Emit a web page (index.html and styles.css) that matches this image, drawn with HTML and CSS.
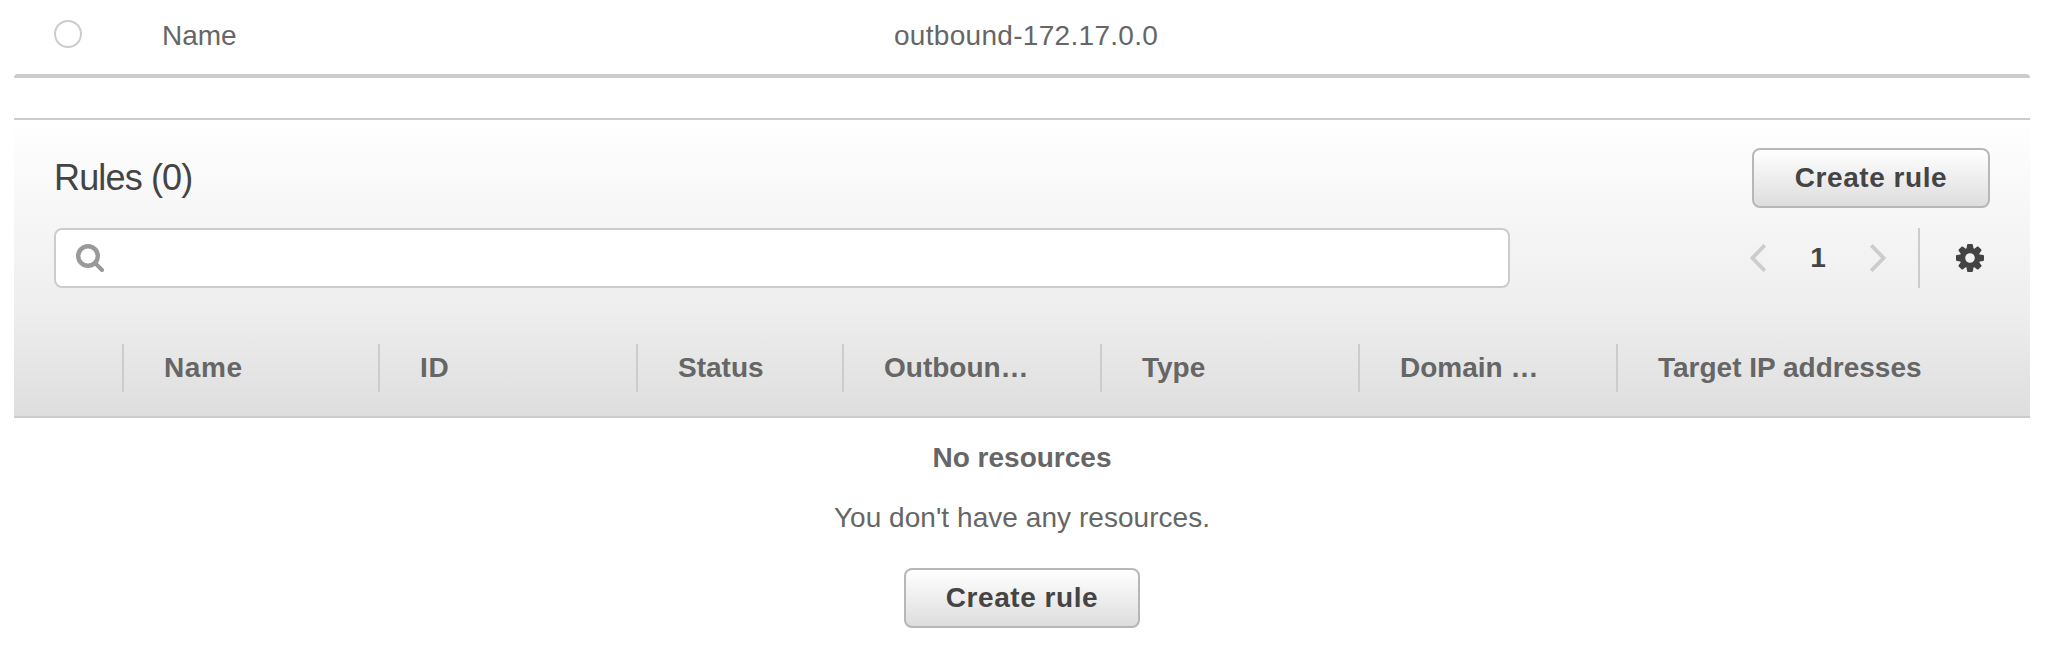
FILE: index.html
```html
<!DOCTYPE html>
<html lang="en">
<head>
<meta charset="utf-8">
<title>Rules</title>
<link rel="stylesheet" href="styles.css">
</head>
<body>
<main class="page">
  <section class="selection">
    <span class="radio"></span>
    <span class="selection-label">Name</span>
    <span class="selection-value">outbound-172.17.0.0</span>
  </section>
  <section class="panel">
    <header class="tools">
      <div class="title-row">
        <h2 class="title">Rules (0)</h2>
        <button class="button button-top"><span>Create rule</span></button>
      </div>
      <div class="filter-row">
        <div class="search">
          <svg class="icon" viewBox="0 0 28 28"><circle cx="12" cy="12" r="9.8" fill="none" stroke="#999" stroke-width="4.4"/><path d="M19.5 19.5 L26 26" stroke="#999" stroke-width="4" stroke-linecap="round"/></svg>
        </div>
        <div class="pager">
          <svg class="chevron" viewBox="0 0 16 28"><path d="M14.7 1.3 L2.4 14 L14.7 26.7" fill="none" stroke="#ccc" stroke-width="3.8"/></svg>
          <span class="page-number">1</span>
          <svg class="chevron" viewBox="0 0 16 28"><path d="M1.3 1.3 L13.6 14 L1.3 26.7" fill="none" stroke="#ccc" stroke-width="3.8"/></svg>
        </div>
        <div class="settings">
          <svg class="icon" viewBox="-14 -14 28 28">
            <defs><path id="tooth" d="M-3.7 -8 L-2.9 -13.2 Q-2.7 -14 -2 -14 H2 Q2.7 -14 2.9 -13.2 L3.7 -8 Z"/></defs>
            <g fill="#444">
              <use href="#tooth"/><use href="#tooth" transform="rotate(45)"/><use href="#tooth" transform="rotate(90)"/><use href="#tooth" transform="rotate(135)"/><use href="#tooth" transform="rotate(180)"/><use href="#tooth" transform="rotate(225)"/><use href="#tooth" transform="rotate(270)"/><use href="#tooth" transform="rotate(315)"/>
            </g>
            <circle r="7.5" fill="none" stroke="#444" stroke-width="5.4"/>
          </svg>
        </div>
      </div>
    </header>
    <div class="columns">
      <span></span>
      <span class="column column-wide">Name</span>
      <span class="column column-wide">ID</span>
      <span class="column">Status</span>
      <span class="column">Outboun…</span>
      <span class="column">Type</span>
      <span class="column">Domain …</span>
      <span class="column">Target IP addresses</span>
    </div>
    <div class="empty">
      <strong class="empty-title">No resources</strong>
      <p class="empty-text">You don't have any resources.</p>
      <button class="button"><span>Create rule</span></button>
    </div>
  </section>
</main>
</body>
</html>
```
FILE: styles.css
```css
* { box-sizing: border-box; }
body {
  margin: 0;
  background: #fff;
  color: #666;
  font: 28px/40px "Liberation Sans", Arial, sans-serif;
}
.page { padding: 0 18px 0 14px; }
.selection {
  display: grid;
  grid-template-columns: 108px 732px 1fr;
  height: 78px;
  padding: 16px 0 0 40px;
  position: relative;
}
.selection::after {
  content: "";
  position: absolute;
  inset: auto 0 0 0;
  height: 4px;
  background: #ccc;
  border-radius: 4px 4px 0 0;
}
.radio {
  width: 28px;
  height: 28px;
  margin-top: 4px;
  border: 2px solid #ccc;
  border-radius: 50%;
}
.selection-value { letter-spacing: 0.3px; }
.panel { margin-top: 40px; border-top: 2px solid #ccc; }
.tools {
  height: 188px;
  padding: 28px 40px 0;
  background: linear-gradient(#fff, #eee);
}
.title-row { display: flex; justify-content: space-between; }
.title {
  margin: 0;
  color: #444;
  font-size: 36px;
  font-weight: 400;
  line-height: 60px;
  letter-spacing: -0.85px;
}
.button {
  width: 236px;
  height: 60px;
  padding: 0;
  border: 2px solid #b7b7b7;
  border-radius: 8px;
  background: linear-gradient(#fff, #ddd);
  color: #444;
  font: bold 28px/56px "Liberation Sans", Arial, sans-serif;
  letter-spacing: 0.55px;
}
.button-top { width: 238px; }
.filter-row { display: flex; height: 60px; margin-top: 20px; }
.search {
  width: 1456px;
  padding: 14px 20px;
  border: 2px solid #ccc;
  border-radius: 8px;
  background: #fff;
}
.icon { display: block; width: 28px; height: 28px; }
.pager {
  display: flex;
  align-items: center;
  justify-content: space-between;
  width: 136px;
  margin: 0 32px 0 auto;
}
.chevron { width: 16px; height: 28px; }
.page-number { color: #444; font-weight: 700; }
.settings { padding: 16px 6px 0 36px; border-left: 2px solid #ccc; }
.columns {
  display: grid;
  grid-template-columns: 108px 256px 258px 206px 258px 258px 258px 1fr;
  height: 110px;
  padding: 36px 0 26px;
  border-bottom: 2px solid #ccc;
  background: linear-gradient(#eee, #dedede);
}
.column {
  padding-left: 40px;
  border-left: 2px solid #ccc;
  font-weight: 700;
  line-height: 48px;
  white-space: nowrap;
}
.column-wide { letter-spacing: 0.6px; }
.empty {
  display: flex;
  flex-direction: column;
  align-items: center;
  padding-top: 20px;
}
.empty-text { margin: 20px 0 30px; letter-spacing: 0.05px; }
```
